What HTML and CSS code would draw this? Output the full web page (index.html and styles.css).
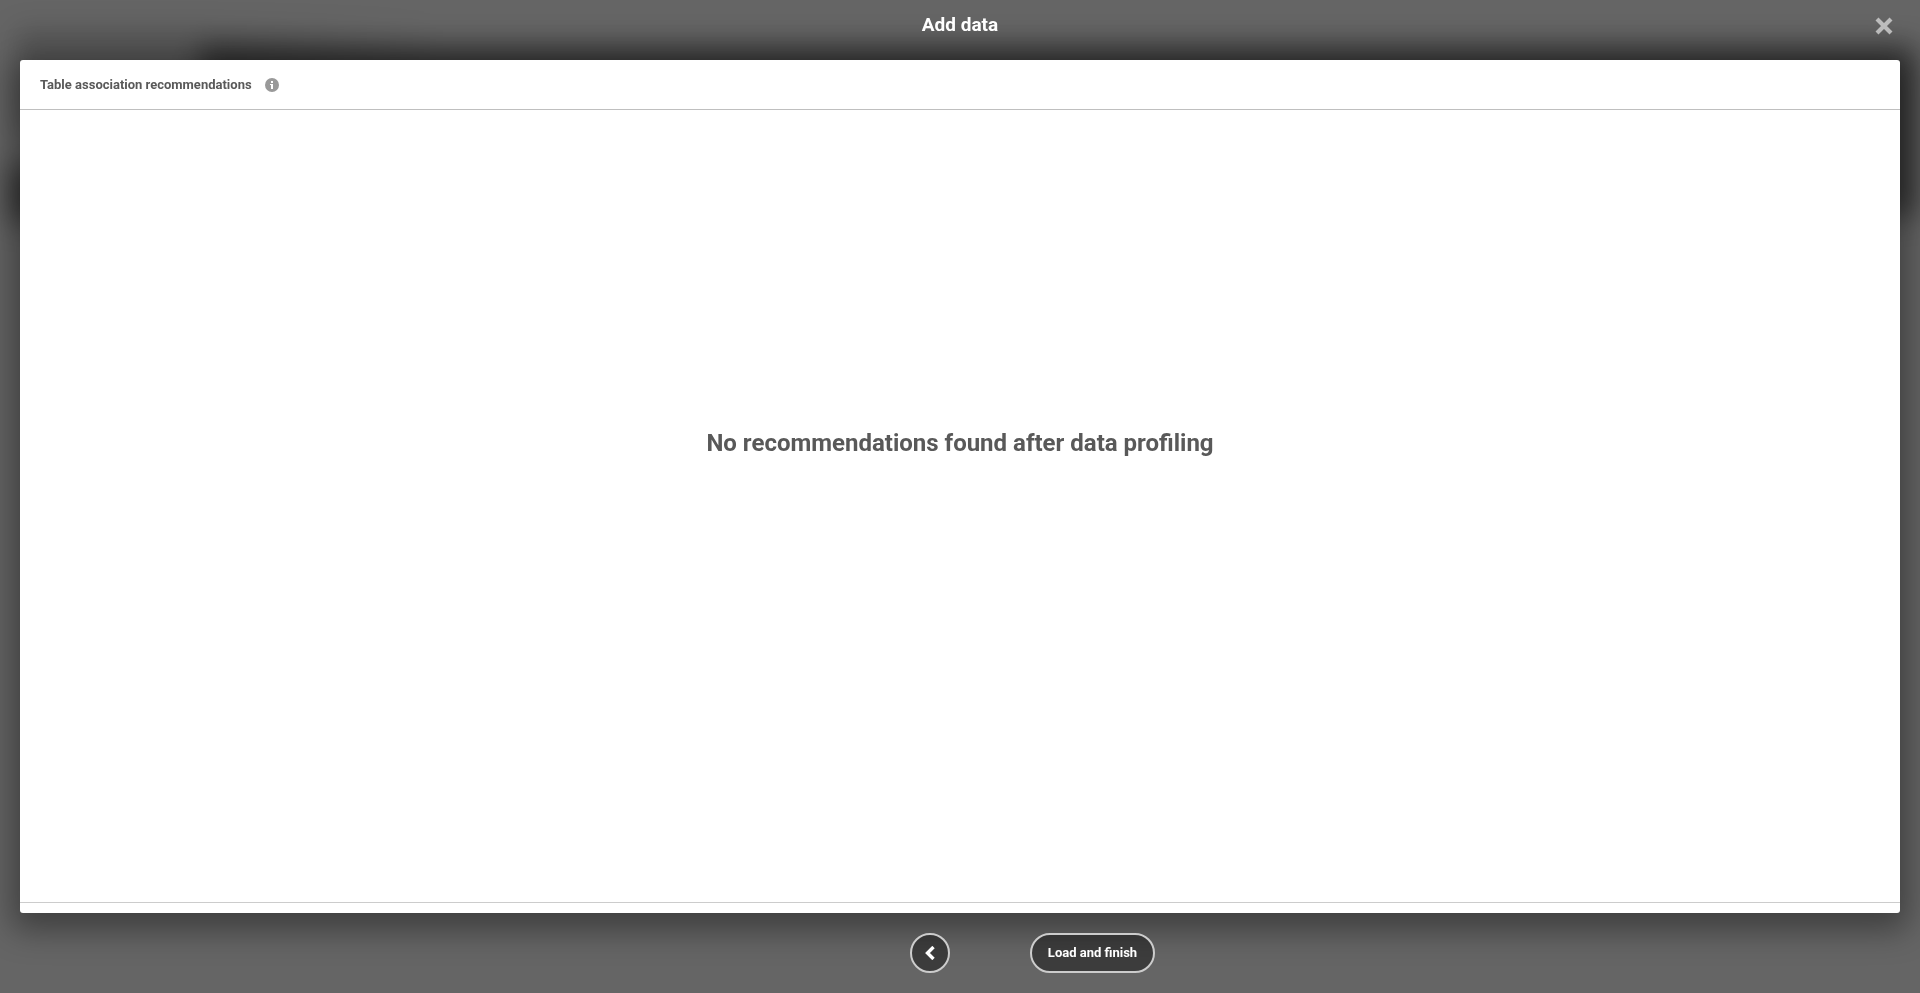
FILE: index.html
```html
<!DOCTYPE html>
<html lang="en">
<head>
<meta charset="utf-8">
<title>Add data</title>
<link rel="stylesheet" href="styles.css">
</head>
<body>
<div class="backdrop" aria-hidden="true">
  <div class="backdrop-menu"></div>
  <div class="backdrop-toolbar"></div>
  <div class="backdrop-side"></div>
</div>
<div class="dialog">
  <header class="dialog-header">
    <h1 class="dialog-title">Add data</h1>
    <button class="close-button" type="button" aria-label="Close">
      <svg width="18" height="18" viewBox="0 0 18 18"><path d="M2 2 16 16M16 2 2 16" fill="none" stroke="currentColor" stroke-width="4.2"/></svg>
    </button>
  </header>
  <main class="panel">
    <div class="panel-header">
      <h2 class="panel-title">Table association recommendations</h2>
      <button class="info-button" type="button" aria-label="Information">
        <svg width="14" height="14" viewBox="0 0 14 14"><circle cx="7" cy="7" r="7" fill="#999"/><path d="M6 3h2v2H6zM5 6h3v5H6V7H5z" fill="#fff"/></svg>
      </button>
    </div>
    <div class="panel-body">
      <p class="empty-message">No recommendations found after data profiling</p>
    </div>
    <div class="panel-footer"></div>
  </main>
  <footer class="dialog-footer">
    <button class="pill-button back-button" type="button" aria-label="Back">
      <svg width="12" height="14" viewBox="0 0 12 14"><path d="M9.5 1 3.5 7l6 6" fill="none" stroke="currentColor" stroke-width="3.4"/></svg>
    </button>
    <button class="pill-button load-button" type="button">Load and finish</button>
  </footer>
</div>
</body>
</html>
```
FILE: styles.css
```css
* { box-sizing: border-box; }
body {
  margin: 0;
  background: #656565;
  font-family: Roboto, "Liberation Sans", sans-serif;
  color: #595959;
}
h1, h2, p { margin: 0; }
button {
  padding: 0;
  border: 0;
  background: none;
  font-family: inherit;
  cursor: pointer;
}
svg { display: block; }

/* Dimmed application behind the dialog */
.backdrop {
  position: fixed;
  inset: 0;
  overflow: hidden;
}
.backdrop-menu,
.backdrop-toolbar,
.backdrop-side {
  position: absolute;
  background: rgba(0, 0, 0, 0.48);
  filter: blur(14px);
}
.backdrop-menu {
  top: 30px;
  left: 16px;
  width: 440px;
  height: 100px;
  background: linear-gradient(to right, rgba(0, 0, 0, 0.18) 40%, transparent);
}
.backdrop-toolbar { top: 46px; left: 200px; right: 4px; height: 170px; }
.backdrop-side { top: 166px; left: 10px; width: 220px; height: 56px; }

.dialog {
  position: relative;
  display: flex;
  flex-direction: column;
  min-height: 100vh;
}
.dialog-header {
  display: grid;
  grid-template-columns: 1fr auto 1fr;
  align-items: center;
  height: 60px;
  padding: 0 24px 10px;
}
.dialog-title {
  grid-column: 2;
  color: #fff;
  font-size: 19px;
  line-height: 24px;
  font-weight: 700;
}
.close-button {
  justify-self: end;
  padding: 2px 3px 0;
  color: #bdbdbd;
}
.panel {
  flex: 1;
  display: flex;
  flex-direction: column;
  margin: 0 20px;
  border-radius: 3px;
  background: #fff;
  box-shadow: 0 9px 32px 8px rgba(0, 0, 0, 0.38);
}
.panel-header {
  display: flex;
  align-items: center;
  gap: 13px;
  height: 50px;
  padding: 0 20px;
  border-bottom: 1px solid #bfbfbf;
}
.panel-title {
  font-size: 13px;
  line-height: 20px;
  font-weight: 700;
}
.panel-body {
  flex: 1;
  display: flex;
  flex-direction: column;
  align-items: center;
}
.panel-body::before { content: ""; flex: 5; }
.panel-body::after { content: ""; flex: 7; }
.empty-message {
  font-size: 24px;
  line-height: 32px;
  font-weight: 700;
  text-align: center;
}
.panel-footer {
  height: 11px;
  border-top: 1px solid #ccc;
}
.dialog-footer {
  display: flex;
  justify-content: center;
  align-items: center;
  gap: 80px;
  height: 80px;
  padding-left: 145px;
}
.pill-button {
  display: flex;
  align-items: center;
  justify-content: center;
  height: 40px;
  border: 2px solid #ccc;
  border-radius: 20px;
  background: rgba(0, 0, 0, 0.4);
  color: #fff;
  font-size: 13px;
  line-height: 20px;
  font-weight: 700;
}
.back-button { width: 40px; }
.load-button { padding: 0 16px; }
```
